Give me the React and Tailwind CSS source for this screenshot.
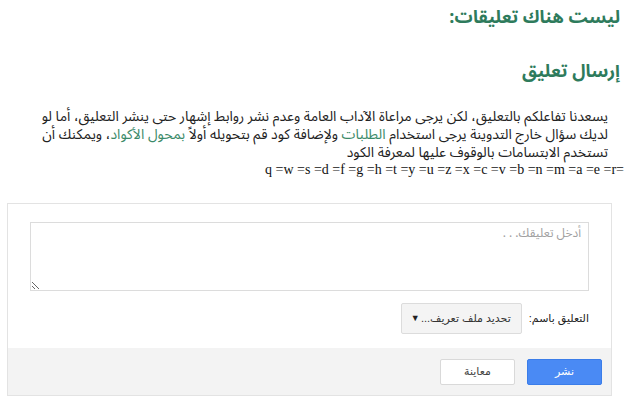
import { useState } from "react";

const App = () => {
    const [comment, setComment] = useState("");

    return (
        <div dir="rtl" className="w-[627px] h-[415px] overflow-hidden bg-white font-['Noto_Sans_Arabic','DejaVu_Sans',sans-serif] text-[#222]">
            <h4 className="pr-[7px] pt-[3px] text-[18px] leading-[28px] font-bold text-[#2e7b5c]">
                ليست هناك تعليقات:
            </h4>
            <h4 className="pr-[7px] mt-[26px] text-[18px] leading-[28px] font-bold text-[#2e7b5c]">
                إرسال تعليق
            </h4>
            <p className="pr-[19px] pl-[10px] mt-[23px] text-[14px] leading-[18px]">
                يسعدنا تفاعلكم بالتعليق، لكن يرجى مراعاة الآداب العامة وعدم نشر روابط إشهار حتى ينشر التعليق، أما لو لديك سؤال خارج التدوينة يرجى استخدام{" "}
                <a href="#" className="text-[#3b8a69]">الطلبات</a>{" "}
                ولإضافة كود قم بتحويله أولاً{" "}
                <a href="#" className="text-[#3b8a69]">بمحول الأكواد</a>، ويمكنك أن تستخدم الابتسامات بالوقوف عليها لمعرفة الكود
            </p>
            <div dir="ltr" className="text-right pr-[3px] text-[14px] leading-[16px] font-['Liberation_Serif',serif] text-[#111]">
                q =w =s =d =f =g =h =t =y =u =z =x =c =v =b =n =m =a =e =r=
            </div>

            <div className="mt-[25px] mr-[15px] w-[605px] border border-[#e3e3e3]">
                <div className="px-[22px] pt-[18px]">
                    <textarea
                        className="block w-full h-[69px] border border-[#dcdcdc] px-[7px] py-[2px] text-[12px] resize-y outline-none placeholder:text-[#a0a0a0]"
                        placeholder="أدخل تعليقك. . ."
                        value={comment}
                        onChange={(e) => setComment(e.target.value)}
                    />
                </div>
                <div className="flex items-center gap-[7px] mt-[12px] pr-[22px] h-[31px] text-[11px] font-['Liberation_Sans','DejaVu_Sans',sans-serif]">
                    <span>التعليق باسم:</span>
                    <button className="flex items-center justify-between w-[121px] h-[31px] pr-[10px] pl-[9px] bg-[#f4f4f4] border border-[#dcdcdc] rounded-[2px] text-[#333]">
                        <span>تحديد ملف تعريف...</span>
                        <span className="text-[9px] text-[#222]">▼</span>
                    </button>
                </div>
                <div className="mt-[14px] h-[47px] bg-[#f3f3f3] flex items-center gap-[12px] pr-[9px] text-[11px] font-['Liberation_Sans','DejaVu_Sans',sans-serif]">
                    <button className="w-[75px] h-[26px] bg-[#4a8af4] border border-[#3b7de9] rounded-[2px] text-white">
                        نشر
                    </button>
                    <button className="w-[75px] h-[26px] bg-white border border-[#d9d9d9] rounded-[2px] text-[#444]">
                        معاينة
                    </button>
                </div>
            </div>
        </div>
    )
}

export default App
